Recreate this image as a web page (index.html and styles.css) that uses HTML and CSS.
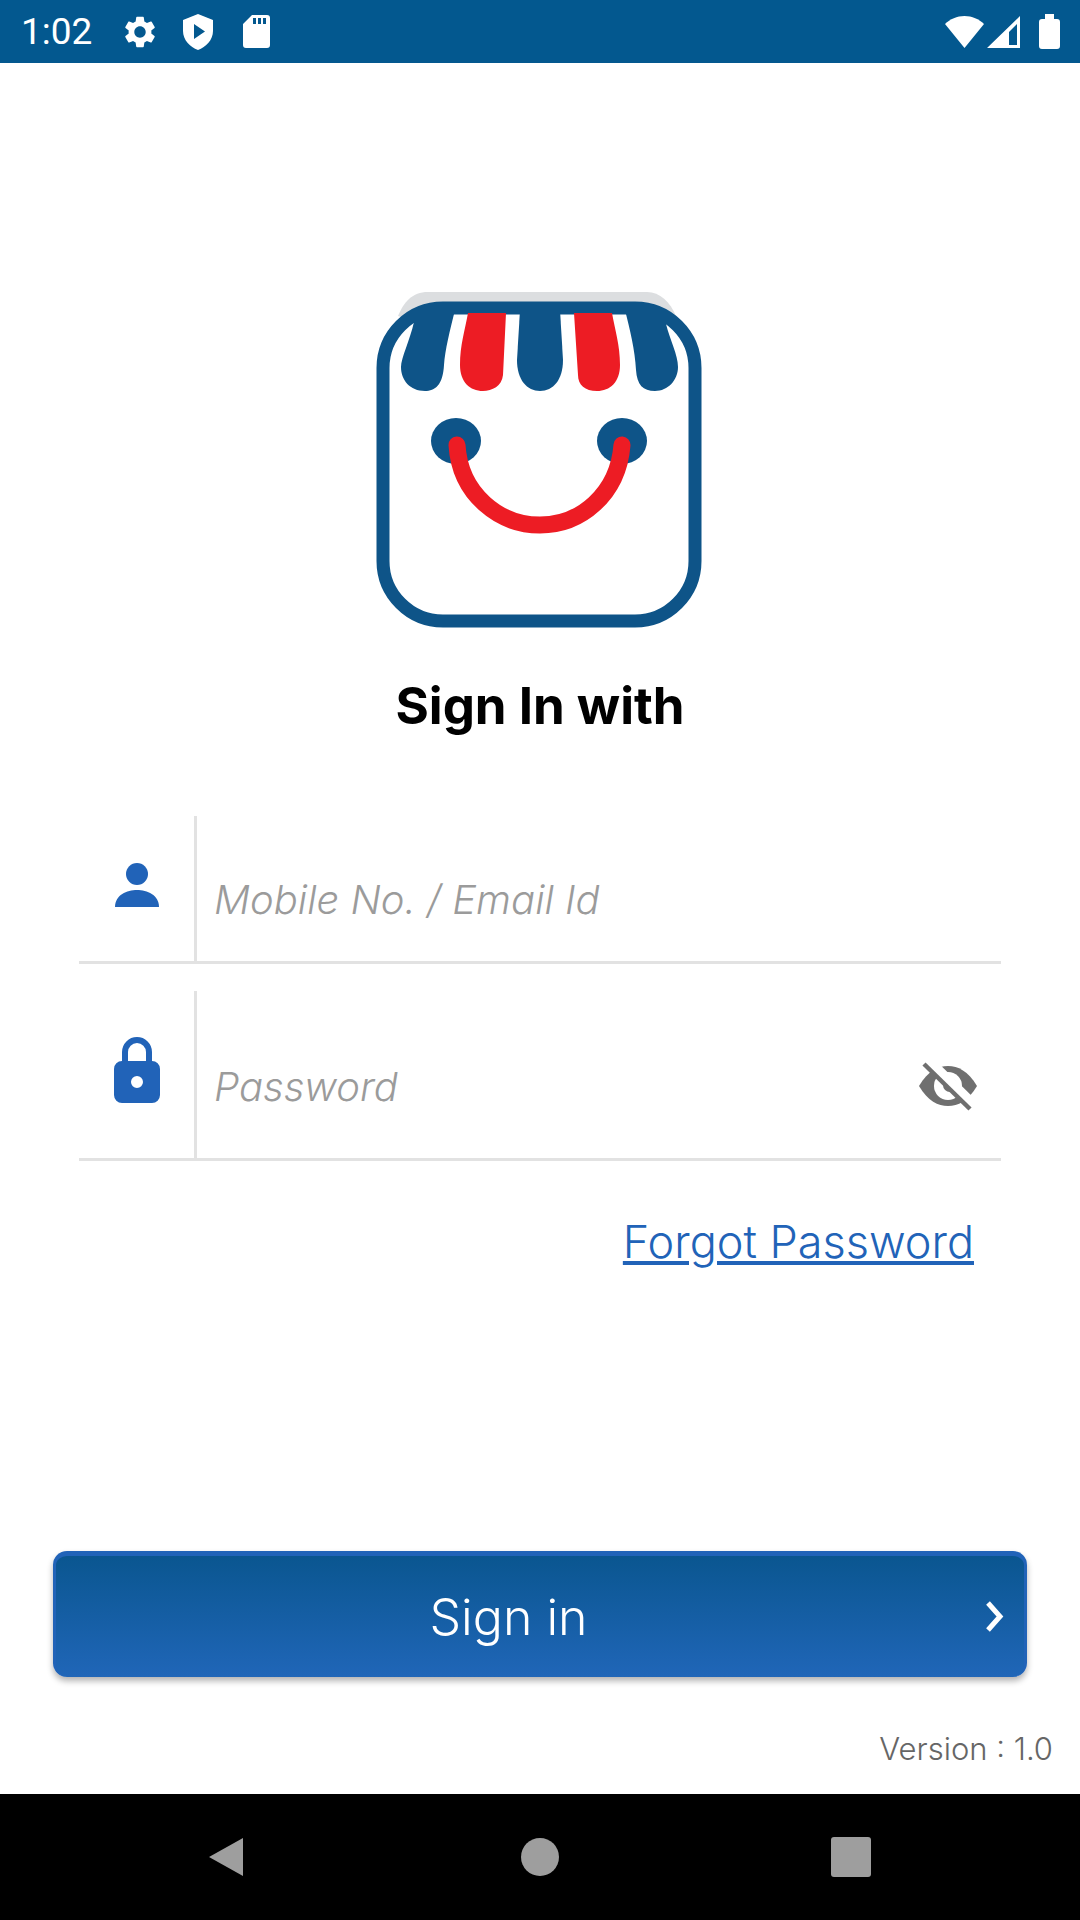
FILE: index.html
```html
<!DOCTYPE html>
<html lang="en">
<head>
  <meta charset="UTF-8" />
  <title>Sign In</title>
  <link rel="stylesheet" href="styles.css">
</head>
<body>
  <div class="status-bar">
    <span class="clock">1:02</span>
    <svg class="ic-gear" viewBox="0 0 24 24"><path fill-rule="evenodd" d="M19.14 12.94c.04-.3.06-.61.06-.94 0-.32-.02-.64-.07-.94l2.03-1.58a.49.49 0 0 0 .12-.61l-1.92-3.32a.488.488 0 0 0-.59-.22l-2.39.96c-.5-.38-1.03-.7-1.62-.94l-.36-2.54a.484.484 0 0 0-.48-.41h-3.84c-.24 0-.43.17-.47.41l-.36 2.54c-.59.24-1.13.57-1.62.94l-2.39-.96c-.22-.08-.47 0-.59.22L2.74 8.87c-.12.21-.08.47.12.61l2.03 1.58c-.05.3-.09.63-.09.94s.02.64.07.94l-2.03 1.58a.49.49 0 0 0-.12.61l1.92 3.32c.12.22.37.29.59.22l2.39-.96c.5.38 1.03.7 1.62.94l.36 2.54c.05.24.24.41.48.41h3.84c.24 0 .44-.17.47-.41l.36-2.54c.59-.24 1.13-.56 1.62-.94l2.39.96c.22.08.47 0 .59-.22l1.92-3.32c.12-.22.07-.47-.12-.61l-2.01-1.58zM12 15.6c-1.98 0-3.6-1.62-3.6-3.6s1.62-3.6 3.6-3.6 3.6 1.62 3.6 3.6-1.62 3.6-3.6 3.6z"/></svg>
    <svg class="ic-shield" viewBox="0 0 30 36"><path fill-rule="evenodd" d="M15 0 L30 6 V17 C30 26 23 33 15 36 C7 33 0 26 0 17 V6Z M11 10 V25 L22 17.5Z"/></svg>
    <svg class="ic-sd" viewBox="0 0 27 33"><path fill-rule="evenodd" d="M9 0 H24 a3 3 0 0 1 3 3 V30 a3 3 0 0 1 -3 3 H3 a3 3 0 0 1 -3 -3 V9Z M10 3 V9 H13 V3Z M15 3 V9 H18 V3Z M20 3 V9 H23 V3Z"/></svg>
    <div class="status-right">
      <svg class="ic-wifi" viewBox="0 0 39 32"><path d="M19.5 32 L0 8 C5 3 12 0 19.5 0 C27 0 34 3 39 8Z"/></svg>
      <svg class="ic-signal" viewBox="0 0 33 32"><path fill-rule="evenodd" d="M0 32 H33 V0Z M22 29 H30 V8 L22 16Z"/></svg>
      <svg class="ic-battery" viewBox="0 0 21 35"><path d="M6 0 H15 V5 H18 a3 3 0 0 1 3 3 V32 a3 3 0 0 1 -3 3 H3 a3 3 0 0 1 -3 -3 V8 a3 3 0 0 1 3 -3 H6Z"/></svg>
    </div>
  </div>

  <div class="content">
    <svg class="logo" viewBox="0 0 360 360">
      <path class="logo-shade" d="M38 36 C44 22 52 12 68 12 H287 C300 12 310 22 316 36 L300 40 H50Z"/>
      <rect class="logo-frame" x="23" y="28" width="312" height="313" rx="60"/>
      <path class="logo-blue" d="M54 30 H95 C90 50 85 70 84 85 C83 105 75 111 65 111 C50 111 41 100 41 87 C41 78 50 60 54 42Z"/>
      <path class="logo-red" d="M108 33 H146 L143 95 C142 106 132 111 123 111 C110 111 100 102 100 85 C100 65 105 50 108 33Z"/>
      <path class="logo-blue" d="M160 30 H200 L203 80 C203 100 193 111 180 111 C167 111 157 100 157 80Z"/>
      <path class="logo-red" d="M214 33 H252 C255 50 260 65 260 85 C260 102 250 111 237 111 C225 111 218 105 218 95Z"/>
      <path class="logo-blue" d="M265 30 H306 V44 C310 60 318 75 318 87 C318 100 308 111 295 111 C283 111 277 105 276 90 C275 70 270 50 265 30Z"/>
      <ellipse class="logo-blue" cx="96" cy="161" rx="25" ry="23"/>
      <ellipse class="logo-blue" cx="262" cy="161" rx="25" ry="23"/>
      <path class="logo-smile" d="M97 165 C100 215 140 245 180 245 C220 245 258 215 262 165"/>
    </svg>

    <h1 class="title">Sign In with</h1>

    <div class="field field-user">
      <div class="field-icon">
        <svg class="ic-person" viewBox="0 0 44 44"><circle cx="22" cy="11" r="11"/><path d="M0 44 C0 32 12 27 22 27 C32 27 44 32 44 44Z"/></svg>
      </div>
      <div class="field-input">
        <span class="placeholder">Mobile No. / Email Id</span>
      </div>
    </div>

    <div class="field field-pass">
      <div class="field-icon">
        <svg class="ic-lock" viewBox="0 0 46 66">
          <path class="lock-bow" d="M11 26 V15 a12 12 0 0 1 24 0 V26"/>
          <path fill-rule="evenodd" d="M8 24 H38 a8 8 0 0 1 8 8 V58 a8 8 0 0 1 -8 8 H8 a8 8 0 0 1 -8 -8 V32 a8 8 0 0 1 8 -8Z M23 39 a6 6 0 1 0 0 12 a6 6 0 1 0 0 -12Z"/>
        </svg>
      </div>
      <div class="field-input">
        <span class="placeholder">Password</span>
        <svg class="ic-eye" viewBox="0 0 60 50">
          <path fill="#6f6f6f" d="M1 25 C10 10 20 5 30 5 C40 5 50 10 59 25 C50 40 40 45 30 45 C20 45 10 40 1 25Z"/>
          <circle cx="30" cy="25" r="14" fill="#fff"/>
          <circle cx="32" cy="24" r="7" fill="#6f6f6f"/>
          <path d="M6 1 L54 48" stroke="#fff" stroke-width="10" transform="translate(3 -3)"/>
          <path d="M6 3 L52 48" stroke="#6f6f6f" stroke-width="4.5"/>
        </svg>
      </div>
    </div>

    <a class="forgot" href="#">Forgot Password</a>

    <button class="signin">
      <span class="signin-label">Sign in</span>
      <span class="signin-arrow">
        <svg viewBox="0 0 20 31"><path d="M4 2 L16 15.5 L4 29"/></svg>
      </span>
    </button>

    <div class="version">Version : 1.0</div>
  </div>

  <div class="nav-bar">
    <svg class="nav-back" viewBox="0 0 38 42"><path d="M36 2 V40 L2 21Z"/></svg>
    <span class="nav-home"></span>
    <span class="nav-recent"></span>
  </div>
</body>
</html>
```

FILE: styles.css
```css
:root {
  --brand: #03588f;
  --blue: #2163b8;
  --line: #e2e2e2;
  --hint: #9b9b9b;
}

* {
  box-sizing: border-box;
}

body {
  margin: 0;
  width: 1080px;
  height: 1920px;
  display: flex;
  flex-direction: column;
  background-color: #ffffff;
  font-family: Inter, Lato, sans-serif;
  overflow: hidden;
}

/* status bar */
.status-bar {
  height: 63px;
  background-color: var(--brand);
  display: flex;
  align-items: center;
  padding-left: 21px;
  fill: #ffffff;
}

.clock {
  font-family: Roboto, sans-serif;
  font-size: 37px;
  color: #ffffff;
  width: 100px;
}

.ic-gear {
  width: 38px;
  height: 38px;
  margin-right: 24px;
}

.ic-shield {
  width: 30px;
  height: 36px;
  margin-right: 30px;
}

.ic-sd {
  width: 27px;
  height: 33px;
}

.status-right {
  margin-left: auto;
  margin-right: 20px;
  display: flex;
  align-items: center;
}

.ic-wifi {
  width: 39px;
  height: 32px;
  margin-right: 3px;
}

.ic-signal {
  width: 33px;
  height: 32px;
  margin-right: 19px;
}

.ic-battery {
  width: 21px;
  height: 35px;
}

/* main */
.content {
  flex: 1;
  display: flex;
  flex-direction: column;
  align-items: center;
}

.logo {
  width: 360px;
  height: 360px;
  margin-top: 217px;
  flex: none;
}

.logo-shade {
  fill: #dcdee0;
}

.logo-frame {
  fill: #ffffff;
  stroke: #0e5488;
  stroke-width: 13;
}

.logo-blue {
  fill: #0e5488;
}

.logo-red {
  fill: #ed1c24;
}

.logo-smile {
  fill: none;
  stroke: #ed1c24;
  stroke-width: 17;
  stroke-linecap: round;
}

.title {
  margin: 36px 0 0;
  font-size: 51px;
  line-height: 60px;
  font-weight: 700;
  color: #000000;
}

.field {
  width: 922px;
  display: flex;
  border-bottom: 3px solid var(--line);
  flex: none;
}

.field-user {
  height: 148px;
  margin-top: 80px;
}

.field-pass {
  height: 170px;
  margin-top: 27px;
}

.field-icon {
  width: 115px;
  display: flex;
  justify-content: center;
  align-items: flex-start;
  fill: var(--blue);
}

.field-user .field-icon {
  padding-top: 47px;
}

.field-pass .field-icon {
  padding-top: 46px;
}

.ic-person {
  width: 44px;
  height: 44px;
}

.ic-lock {
  width: 46px;
  height: 66px;
}

.lock-bow {
  fill: none;
  stroke: var(--blue);
  stroke-width: 6;
}

.field-input {
  flex: 1;
  display: flex;
  align-items: center;
  border-left: 3px solid var(--line);
  padding-left: 17px;
  padding-right: 23px;
}

.field-user .field-input {
  padding-top: 22px;
}

.field-pass .field-input {
  padding-top: 23px;
}

.placeholder {
  font-size: 40px;
  font-style: italic;
  font-weight: 300;
  color: var(--hint);
}

.ic-eye {
  width: 60px;
  height: 50px;
  margin-left: auto;
}

.forgot {
  align-self: flex-end;
  margin: 54px 106px 0 0;
  font-size: 45px;
  font-weight: 300;
  line-height: 54px;
  color: var(--blue);
}

.signin {
  width: 974px;
  height: 126px;
  margin-top: 282px;
  padding: 0;
  flex: none;
  display: flex;
  align-items: center;
  border: none;
  border-top: 5px solid var(--blue);
  border-left: 3px solid var(--blue);
  border-right: 3px solid var(--blue);
  border-radius: 14px;
  background: linear-gradient(#0a5690, #2066b8);
  box-shadow: 0 4px 6px rgba(0, 0, 0, 0.3);
  font-family: inherit;
  color: #ffffff;
}

.signin-label {
  flex: 1;
  text-align: center;
  font-size: 50px;
  font-weight: 300;
}

.signin-arrow {
  width: 63px;
  padding-left: 23px;
  display: flex;
}

.signin-arrow svg {
  width: 20px;
  height: 31px;
  fill: none;
  stroke: #ffffff;
  stroke-width: 5;
}

.version {
  align-self: flex-end;
  margin: 54px 27px 0 0;
  font-size: 31px;
  font-weight: 300;
  line-height: 36px;
  color: #666666;
}

/* nav bar */
.nav-bar {
  height: 126px;
  background-color: #000000;
  display: flex;
  align-items: center;
  flex: none;
  padding-left: 207px;
}

.nav-back {
  width: 38px;
  height: 42px;
  fill: #9e9e9e;
}

.nav-home {
  width: 38px;
  height: 38px;
  border-radius: 50%;
  background-color: #9e9e9e;
  margin-left: 276px;
}

.nav-recent {
  width: 40px;
  height: 40px;
  border-radius: 3px;
  background-color: #9e9e9e;
  margin-left: 272px;
}
```
